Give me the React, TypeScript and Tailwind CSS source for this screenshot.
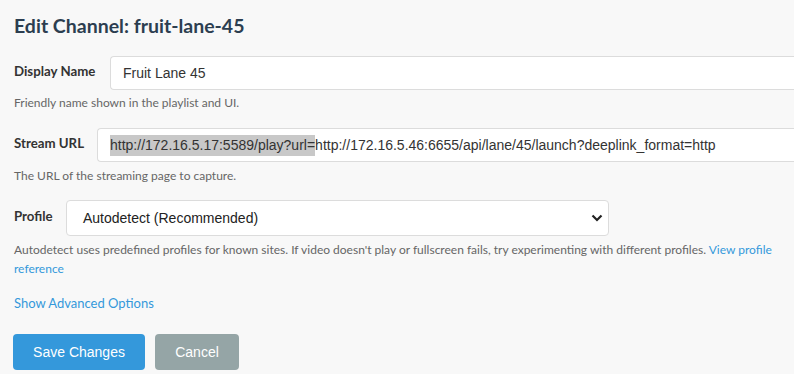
import React from "react";

const ui = { fontFamily: 'Lato, "Noto Sans", sans-serif' };
const arial = { fontFamily: '"Liberation Sans", Arial, sans-serif' };

export default function App() {
  return (
    <div className="min-h-[374px] w-[794px] overflow-hidden bg-[#f8f8f8] pl-[14px] pt-[12px]" style={ui}>
      <h1 className="h-[28px] text-[19.5px] font-bold leading-[28px] text-[#2c3e50]">Edit Channel: fruit-lane-45</h1>

      <div className="mt-[16px] flex h-[34px] items-center">
        <label className="-mt-[3px] w-[96px] flex-none text-[13.25px] font-bold text-[#333]">Display Name</label>
        <div className="flex h-[34px] flex-1 items-center whitespace-nowrap rounded-l-[4px] border border-r-0 border-[#dcdcdc] bg-white pl-[12px] text-[14px] text-[#333]" style={arial}>
          Fruit Lane 45
        </div>
      </div>
      <p className="mt-[4px] h-[18px] text-[12px] leading-[18px] text-[#666]">Friendly name shown in the playlist and UI.</p>

      <div className="mt-[16px] flex h-[34px] items-center">
        <label className="-mt-[3px] w-[83px] flex-none text-[13.25px] font-bold text-[#333]">Stream URL</label>
        <div className="flex h-[34px] flex-1 items-center overflow-hidden whitespace-nowrap rounded-l-[4px] border border-r-0 border-[#dcdcdc] bg-white pl-[12px] text-[14px] text-[#333]" style={arial}>
          <span className="bg-[#c8c8c8]">http://172.16.5.17:5589/play?url=</span>
          <span>http://172.16.5.46:6655/api/lane/45/launch?deeplink_format=http</span>
        </div>
      </div>
      <p className="mt-[5px] h-[18px] text-[12px] leading-[18px] text-[#666]">The URL of the streaming page to capture.</p>

      <div className="mt-[15px] flex h-[36px] items-center">
        <label className="-mt-[3px] w-[52px] flex-none text-[13.25px] font-bold text-[#333]">Profile</label>
        <div className="flex h-[36px] w-[543px] flex-none items-center justify-between rounded-[4px] border border-[#dcdcdc] bg-white pl-[16px] pr-[5px] text-[14px] text-[#222]" style={arial}>
          <span>Autodetect (Recommended)</span>
          <svg width="12" height="8" viewBox="0 0 12 8" fill="none">
            <path d="M1.5 1.5 L6 6 L10.5 1.5" stroke="#222" strokeWidth="2.2" />
          </svg>
        </div>
      </div>
      <div className="mt-[4px] h-[38px] w-[780px] text-[12px] leading-[19px] text-[#666]">
        <div className="whitespace-nowrap">
          <span>Autodetect uses predefined profiles for known sites. If video doesn't play or fullscreen fails, try experimenting with different profiles. </span>
          <span className="text-[#3498db]">View profile</span>
        </div>
        <div className="text-[#3498db]">reference</div>
      </div>

      <div className="mt-[15px] h-[20px] text-[13px] leading-[20px] text-[#3498db]">Show Advanced Options</div>

      <div className="mt-[21px] flex gap-[10px]">
        <button className="-ml-[1px] h-[36px] w-[132px] rounded-[4px] bg-[#3498db] text-[14px] text-white" style={arial}>Save Changes</button>
        <button className="h-[36px] w-[84px] rounded-[4px] bg-[#95a5a6] text-[14px] text-white" style={arial}>Cancel</button>
      </div>
    </div>
  );
}
